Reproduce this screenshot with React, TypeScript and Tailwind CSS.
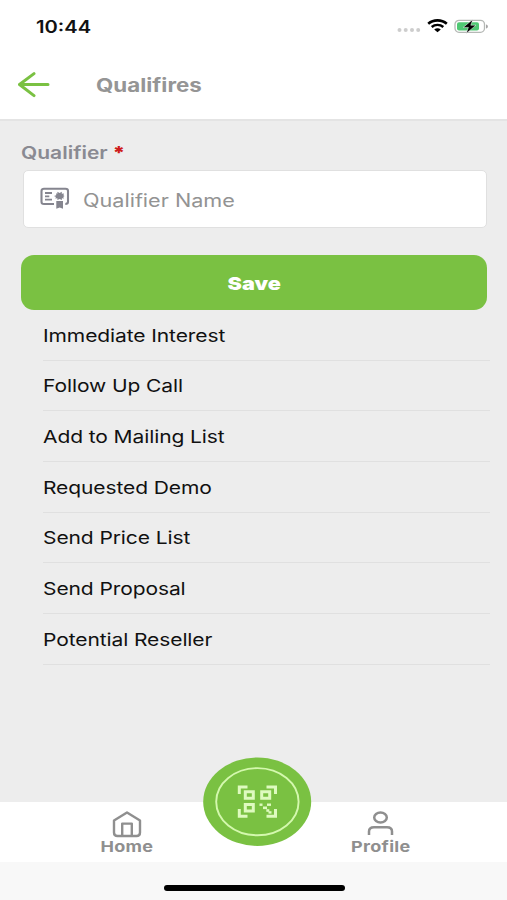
import React from "react";
import { clsx } from "clsx";

const qualifiers = [
  "Immediate Interest",
  "Follow Up Call",
  "Add to Mailing List",
  "Requested Demo",
  "Send Price List",
  "Send Proposal",
  "Potential Reseller",
];

// Wide lettering used across the app
function Wide({ className, children }: { className?: string; children: React.ReactNode }) {
  return (
    <span className={clsx("inline-block whitespace-nowrap scale-x-[1.2]", className)}>{children}</span>
  );
}

function StatusBar() {
  return (
    <div className="flex h-[52px] items-center justify-between pl-[36px] pr-[18px]">
      <Wide className="mt-[3px] origin-left text-[16.8px] font-semibold text-[#111]">10:44</Wide>
      <div className="flex items-center">
        <svg width="24" height="6" viewBox="0 0 24 6" className="mt-2 mr-1.5" fill="#cdcdcd">
          <circle cx="2.5" cy="3" r="2" />
          <circle cx="8.7" cy="3" r="2" />
          <circle cx="15" cy="3" r="2" />
          <circle cx="21.2" cy="3" r="2" />
        </svg>
        <svg width="21" height="14" viewBox="0 0 21 14" className="mr-[6px]" fill="none" stroke="#000">
          <path d="M1.2 4.8C6.5 .2 14.5 .2 19.8 4.8" strokeWidth="2.6" />
          <path d="M4.7 8C8 5.1 13 5.1 16.3 8" strokeWidth="2.4" />
          <path d="M10.5 13.2L7.2 10.4C9.2 8.9 11.8 8.9 13.8 10.4Z" fill="#000" stroke="none" />
        </svg>
        <svg width="35" height="15" viewBox="0 0 35 15">
          <rect x="1" y="1.3" width="29.5" height="12" rx="4" fill="#fff" stroke="#b5b8b5" strokeWidth="1.3" />
          <rect x="3" y="3.2" width="22" height="8.2" rx="2" fill="#4fc873" />
          <path d="M32 5.4C34.5 5.7 34.5 9.1 32 9.4Z" fill="#a5a5a5" />
          <path d="M18.8 .4L9.2 8.4H14.4L12.2 14.4L22 6.2H16.8Z" fill="#000" stroke="#fff" strokeWidth=".5" />
        </svg>
      </div>
    </div>
  );
}

function CertificateIcon() {
  return (
    <svg width="30" height="23" viewBox="0 0 30 23" className="-mt-px" fill="none" stroke="#85858f" strokeWidth="2.1">
      <path d="M14 17H4C2.5 17 1.5 16.2 1.5 14.8V4C1.5 2.6 2.5 1.8 4 1.8H25.5C27 1.8 28 2.6 28 4V14.8C28 16.2 27 17 25.3 17" />
      <path d="M5 6H12M5 9.3H9.3M5 12.6H12" strokeWidth="1.8" />
      <path
        d="M16.2 6.3L17.4 6.8V4.8L19.6 6L21.8 4.8V6.8L24 6.6L23.4 8.2L24.5 9L23.2 10L24 11.6L21.9 11.2V13L19.6 12L17.4 13V11.2L15.2 11.6L16 10L14 9L16.2 8.2Z"
        fill="#85858f"
        stroke="none"
      />
      <path d="M16.3 14H23V21.8L19.7 20.6L16.3 21.8Z" fill="#85858f" stroke="none" />
    </svg>
  );
}

function QrBadge() {
  return (
    <svg width="109" height="89" viewBox="0 0 109 89">
      <ellipse cx="54.2" cy="44.7" rx="54" ry="44.2" fill="#7ac142" />
      <ellipse cx="54.4" cy="44.7" rx="41.2" ry="33.6" fill="none" stroke="#d4f8ae" strokeWidth="1.9" />
      <g fill="none" stroke="#defabf" strokeWidth="3">
        <path d="M36.3 37V30H44.5M63.5 30H72.5V37M36.3 52V59.3H44.5M63.5 59.3H72.5V52" />
        <path d="M42.3 34.8H50.3V41.3H42.3ZM58.7 34.8H66.7V41.3H58.7ZM42.3 47.6H50.3V54.1H42.3Z" />
      </g>
      <g fill="#defabf">
        <rect x="56.5" y="46.5" width="3" height="2.4" />
        <rect x="64" y="46.5" width="4" height="2.4" />
        <rect x="60" y="49.5" width="4" height="2.6" />
        <rect x="63.3" y="52.2" width="3" height="2.6" />
        <rect x="65.5" y="54.2" width="3" height="2.4" />
      </g>
    </svg>
  );
}

export default function App() {
  return (
    <div
      className="flex h-[900px] w-[507px] flex-col overflow-hidden bg-[#ededed]"
      style={{ fontFamily: 'Inter, "Liberation Sans", sans-serif' }}
    >
      <header className="h-[121px] shrink-0 border-b-2 border-[#e4e4e4] bg-white">
        <StatusBar />
        <div className="flex h-[66px] items-center pl-[17px]">
          <button aria-label="Back" className="mr-[46px]">
            <svg width="33" height="26" viewBox="0 0 33 26" fill="none" stroke="#7ac142" strokeWidth="3" strokeLinecap="round" strokeLinejoin="round">
              <path d="M31 12.5H2.5M17 1.6L2.5 12.5L17 23.6" />
            </svg>
          </button>
          <Wide className="mt-[2px] origin-left text-[18.6px] font-bold text-[#959595]">Qualifires</Wide>
        </div>
      </header>

      <main className="flex-1 px-[21px] pt-[18px]">
        <label className="block h-[31px] text-[17.5px] leading-[27px] font-semibold text-[#8a8a92]">
          <Wide className="origin-left">
            Qualifier<span className="ml-[4px] font-black text-[#cf1c1c]">*</span>
          </Wide>
        </label>
        <div className="ml-[2px] flex h-[58px] w-[464px] items-center rounded-[5px] border border-[#e0e0e0] bg-white pl-[16px]">
          <CertificateIcon />
          <Wide className="mt-[3px] ml-[13px] origin-left text-[18px] text-[#939393]">Qualifier Name</Wide>
        </div>
        <button className="mt-[27px] flex h-[55px] w-[466px] items-center justify-center rounded-[13px] bg-[#7ac142] pt-px text-[18px] font-black text-white">
          <Wide>Save</Wide>
        </button>
        <ul className="ml-[22px] w-[447px]">
          {qualifiers.map((name) => (
            <li key={name} className="flex h-[50.66px] items-center border-b border-[#e0e0e0] pt-[2px] text-[17.5px] tracking-[-0.08px] text-[#111]">
              <Wide className="origin-left">{name}</Wide>
            </li>
          ))}
        </ul>
      </main>

      <nav className="relative flex h-[60px] shrink-0 bg-white text-[15px] font-bold text-[#8f8f8f]">
        <div className="flex w-[254px] flex-col items-center pt-[8px]">
          <svg width="30" height="28" viewBox="0 0 30 28" fill="none" stroke="#8f8f8f" strokeWidth="2.4" strokeLinejoin="round">
            <path d="M2 10.5L15 2.4L28 10.5V22.5C28 25 27 26 24.5 26H5.5C3 26 2 25 2 22.5Z" />
            <path d="M10.2 26V13.6H19.8V26" />
          </svg>
          <Wide className="leading-[17px] tracking-[0.2px]">Home</Wide>
        </div>
        <div className="flex w-[253px] flex-col items-center pt-[8px]">
          <svg width="28" height="28" viewBox="0 0 28 28" fill="none" stroke="#8f8f8f" strokeWidth="2.5">
            <ellipse cx="13.5" cy="7.5" rx="6.3" ry="5" />
            <path d="M2 25V21.5C2 18.8 4 17.2 7 17.2H20C23 17.2 25 18.8 25 21.5V25" />
          </svg>
          <Wide className="leading-[17px] tracking-[0.25px]">Profile</Wide>
        </div>
        {/* scan button sits over the tab bar */}
        <button aria-label="Scan" className="absolute -top-[45px] left-[203px]">
          <QrBadge />
        </button>
      </nav>
      <div className="flex h-[38px] shrink-0 justify-center bg-[#f8f8f8] pt-[23px]">
        <div className="ml-px h-[6px] w-[181px] rounded-full bg-black" />
      </div>
    </div>
  );
}
